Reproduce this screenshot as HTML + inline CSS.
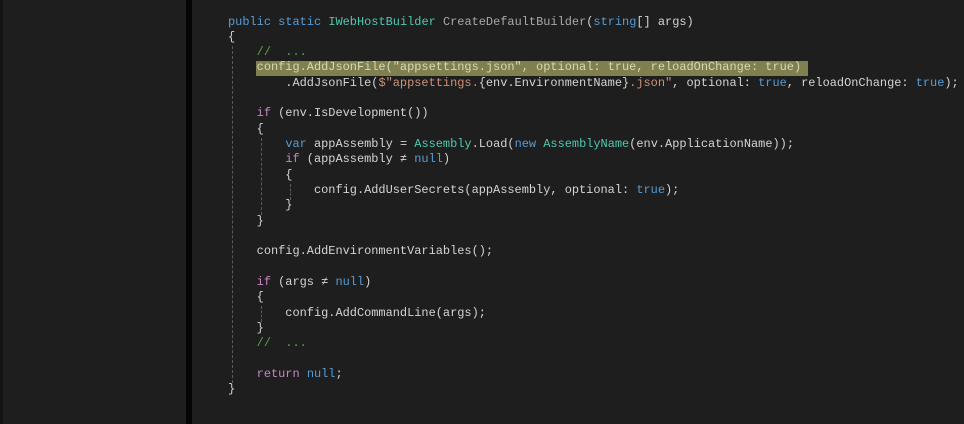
<!DOCTYPE html>
<html><head><meta charset="utf-8">
<style>
html,body{margin:0;padding:0;}
body{width:964px;height:424px;background:#1e1e1e;position:relative;overflow:hidden;}
.lstrip{position:absolute;left:0;top:0;width:3px;height:424px;background:#141414;}
.bar{position:absolute;left:186px;top:0;width:6px;height:424px;background:#050505;}
.hl{position:absolute;left:256px;top:61px;width:552px;height:15px;background:#7f7f4f;}
.code{position:absolute;left:228px;top:14.5px;font-family:"Liberation Mono",monospace;font-size:11.95px;line-height:15.33px;color:#d4d4d4;white-space:pre;}
.k{color:#569cd6}.c{color:#c586c0}.t{color:#4ec9b0}.s{color:#ce9178}.m{color:#57a64a}.g{color:#a8a8a8}
.hlt,.hlt span{color:#d6dab0 !important}
.guide{position:absolute;border-left:1px dashed #5a5a5a;width:0;}
</style></head><body>
<div class="lstrip"></div>
<div class="bar"></div>
<div class="hl"></div>
<div class="guide" style="left:232px;top:46px;height:337px"></div>
<div class="guide" style="left:261px;top:138px;height:77px"></div>
<div class="guide" style="left:290px;top:184px;height:16px"></div>
<div class="guide" style="left:261px;top:306px;height:16px"></div>
<div class="code"><span class="k">public</span> <span class="k">static</span> <span class="t">IWebHostBuilder</span> <span class="g">CreateDefaultBuilder</span>(<span class="k">string</span>[] args)
{
    <span class="m">//  ...</span>
<span class="hlt">    config.AddJsonFile(<span>"appsettings.json"</span>, optional: <span>true</span>, reloadOnChange: <span>true</span>)</span>
        .AddJsonFile(<span class="s">$"appsettings.</span>{env.EnvironmentName}<span class="s">.json"</span>, optional: <span class="k">true</span>, reloadOnChange: <span class="k">true</span>);

    <span class="c">if</span> (env.IsDevelopment())
    {
        <span class="k">var</span> appAssembly = <span class="t">Assembly</span>.Load(<span class="k">new</span> <span class="t">AssemblyName</span>(env.ApplicationName));
        <span class="c">if</span> (appAssembly ≠ <span class="k">null</span>)
        {
            config.AddUserSecrets(appAssembly, optional: <span class="k">true</span>);
        }
    }

    config.AddEnvironmentVariables();

    <span class="c">if</span> (args ≠ <span class="k">null</span>)
    {
        config.AddCommandLine(args);
    }
    <span class="m">//  ...</span>

    <span class="c">return</span> <span class="k">null</span>;
}</div>
</body></html>
